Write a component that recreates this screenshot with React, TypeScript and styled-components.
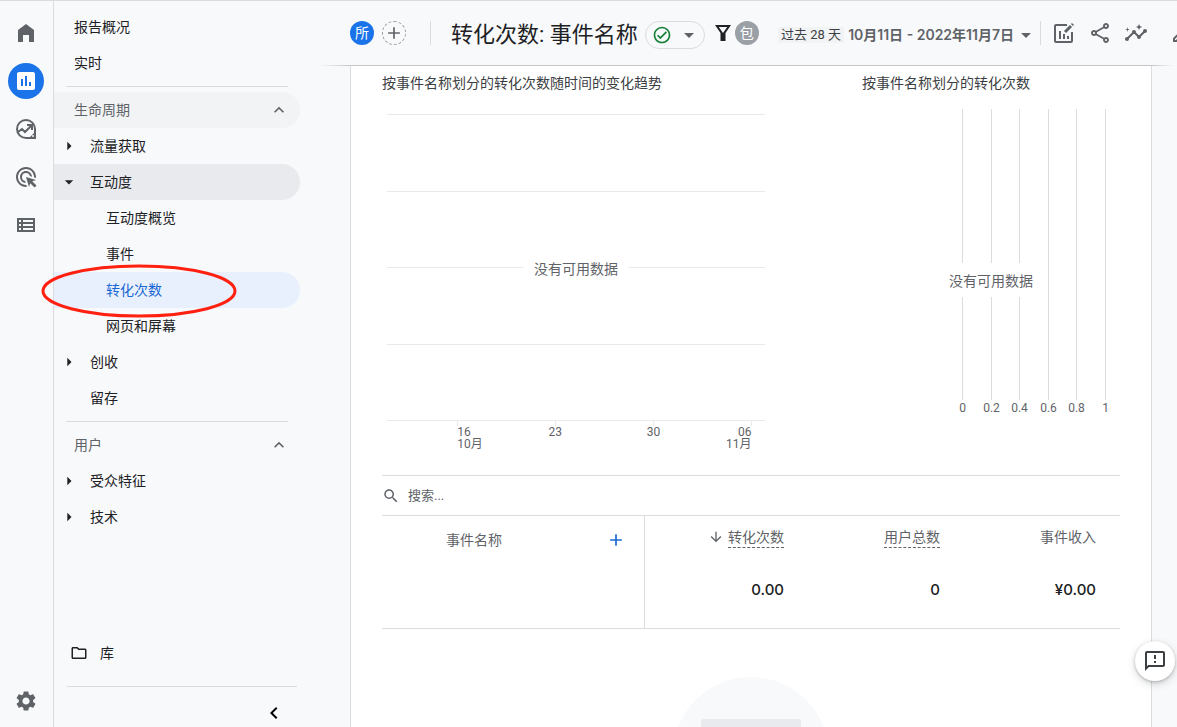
import React from 'react';
import styled, { createGlobalStyle, css } from 'styled-components';
import {
  MdAdd,
  MdArrowDownward,
  MdArrowDropDown,
  MdArrowRight,
  MdChevronLeft,
  MdExpandLess,
  MdInsertChart,
  MdInsights,
  MdOutlineAdsClick,
  MdOutlineCheckCircle,
  MdOutlineEdit,
  MdOutlineFeedback,
  MdOutlineFolder,
  MdOutlineShare,
  MdOutlineViewList,
  MdSearch,
  MdSettings,
} from 'react-icons/md';

const line = '#dadce0';
const grey = '#5f6368';
const ink = '#202124';
const blue = '#1a73e8';

const GlobalStyle = createGlobalStyle`
  *, *::before, *::after { box-sizing: border-box; }
  body {
    margin: 0;
    background: #f8f9fa;
    color: ${ink};
    font: 14px/20px Roboto, "Noto Sans CJK SC", sans-serif;
  }
  button, input { font: inherit; color: inherit; }
  button { border: 0; padding: 0; background: none; cursor: pointer; }
  a { color: inherit; text-decoration: none; }
  svg { display: block; flex: none; }
`;

const Shell = styled.div`
  display: flex;
  height: 100vh;
  overflow: hidden;
  border-top: 1px solid ${line};
  background: #f8f9fb;
`;

const Rail = styled.nav`
  flex: none;
  display: flex;
  flex-direction: column;
  align-items: center;
  gap: 12px;
  width: 54px;
  padding: 14px 2px 8px 0;
  border-right: 1px solid ${line};
`;

const RailButton = styled.button<{ $active?: boolean; $last?: boolean }>`
  display: grid;
  place-items: center;
  width: 36px;
  height: 36px;
  border-radius: 50%;
  color: ${(p) => (p.$active ? '#fff' : grey)};
  background: ${(p) => (p.$active ? blue : 'transparent')};
  ${(p) => p.$last && css`margin-top: auto;`}
`;

const Sidebar = styled.nav`
  flex: none;
  display: flex;
  flex-direction: column;
  width: 266px;
  padding: 8px 20px 0 0;
`;

type Tone = 'section' | 'open' | 'current';
const toneBackground = { section: '#f1f3f4', open: '#e8eaed', current: '#e8f0fe' };

const rowStyle = css`
  position: relative;
  display: flex;
  align-items: center;
  width: 100%;
  height: 36px;
  border-radius: 0 18px 18px 0;
  text-align: left;
`;

const NavLink = styled.a<{ $indent: number; $tone?: Tone }>`
  ${rowStyle}
  padding-left: ${(p) => p.$indent}px;
  color: ${(p) => (p.$tone === 'current' ? '#1967d2' : ink)};
  background: ${(p) => (p.$tone ? toneBackground[p.$tone] : 'transparent')};
`;

const GroupButton = styled.button<{ $tone?: Tone }>`
  ${rowStyle}
  gap: 11px;
  padding-left: 5px;
  background: ${(p) => (p.$tone ? toneBackground[p.$tone] : 'transparent')};
`;

const SectionButton = styled.button<{ $tone?: Tone }>`
  ${rowStyle}
  justify-content: space-between;
  padding: 0 11px 0 20px;
  color: ${grey};
  background: ${(p) => (p.$tone ? toneBackground[p.$tone] : 'transparent')};
`;

const NavRule = styled.hr`
  width: 222px;
  margin: 5px 0 5px 12px;
  border: 0;
  border-top: 1px solid ${line};
`;

const SidebarFoot = styled.div`
  margin-top: auto;
`;

const LibraryLink = styled.a`
  ${rowStyle}
  gap: 12px;
  padding-left: 16px;
`;

const FootBar = styled.div`
  display: flex;
  justify-content: flex-end;
  margin: 15px 3px 0 13px;
  padding: 14px 11px 2px;
  border-top: 1px solid ${line};
  color: #000;
`;

const Marker = styled.svg`
  position: absolute;
  left: -13px;
  top: -8px;
  z-index: 2;
  pointer-events: none;
`;

const Main = styled.main`
  flex: 1;
  min-width: 0;
  display: flex;
  flex-direction: column;
`;

const Header = styled.header`
  flex: none;
  display: flex;
  align-items: center;
  height: 65px;
  padding-left: 30px;
  border-bottom: 1px solid;
  border-image: linear-gradient(to right, transparent, #c4c7ca 30px, #c4c7ca calc(100% - 26px), transparent calc(100% - 4px)) 1;
  overflow: hidden;
`;

const Badge = styled.button<{ $tone: string }>`
  flex: none;
  display: grid;
  place-items: center;
  width: 24px;
  height: 24px;
  border-radius: 50%;
  color: #fff;
  background: ${(p) => p.$tone};
`;

const AddBadge = styled(Badge)`
  margin-left: 8px;
  border: 1px dashed #9aa0a6;
  color: ${grey};
`;

const Separator = styled.span<{ $before: number; $after: number }>`
  flex: none;
  width: 1px;
  height: 24px;
  margin: 0 ${(p) => p.$after}px 0 ${(p) => p.$before}px;
  background: ${line};
`;

const Title = styled.h1`
  margin: 0;
  padding-top: 4px;
  font-size: 22px;
  line-height: 28px;
  font-weight: 400;
  white-space: nowrap;
`;

const StatusButton = styled.button`
  flex: none;
  display: flex;
  align-items: center;
  justify-content: space-between;
  width: 60px;
  height: 28px;
  margin: 4px 6px 0 7px;
  padding: 0 3px 0 6px;
  border: 1px solid ${line};
  border-radius: 14px;
  color: ${grey};
`;

const Tools = styled.div`
  flex: none;
  display: flex;
  align-items: center;
  margin-left: auto;
  margin-right: -23px;
`;

const DateButton = styled.button`
  display: flex;
  align-items: center;
  padding-top: 4px;
  color: ${grey};
  font-size: 13px;
  line-height: 16px;
  white-space: nowrap;
`;

const Preset = styled.span`
  margin-right: 4px;
  padding: 0 3px;
  border-radius: 2px;
  background: #f1f3f4;
  color: #3c4043;
`;

const DateRange = styled.span`
  font-family: Inter, "Noto Sans CJK SC", sans-serif;
  font-size: 14px;
  font-weight: 600;
`;

const ToolButton = styled.button`
  display: grid;
  place-items: center;
  width: 36px;
  height: 36px;
  color: ${grey};

  &:last-child { margin-left: 10px; }
`;

const Scroller = styled.div`
  flex: 1;
  min-height: 0;
  overflow-y: auto;
  scrollbar-width: none;
  padding: 0 25px 0 30px;
`;

const Card = styled.article`
  min-height: 100%;
  padding: 7px 31px 0;
  border: solid ${line};
  border-width: 0 1px;
  background: #fff;
`;

const Charts = styled.section`
  display: grid;
  grid-template-columns: minmax(0, 1fr) 258px;
  column-gap: 92px;
  height: 402px;
`;

const Figure = styled.figure`
  margin: 0;
`;

const Caption = styled.figcaption`
  color: #3c4043;
`;

const Plot = styled.div<{ $top: number; $side: number }>`
  position: relative;
  margin: ${(p) => p.$top}px ${(p) => p.$side}px 0;
`;

const PlotSvg = styled.svg<{ $grid: string }>`
  width: 100%;
  overflow: visible;
  font-size: 12px;
  fill: ${grey};

  line {
    stroke: ${(p) => p.$grid};
    shape-rendering: crispEdges;
  }
`;

const NoData = styled.span<{ $top: number }>`
  position: absolute;
  left: 50%;
  top: ${(p) => p.$top}px;
  transform: translateX(-50%);
  padding: 8px 10px 6px;
  background: #fff;
  color: ${grey};
  white-space: nowrap;
`;

const SearchRow = styled.label`
  display: flex;
  align-items: center;
  gap: 8px;
  height: 41px;
  border: solid ${line};
  border-width: 1px 0;
  color: ${grey};
`;

const SearchInput = styled.input`
  flex: 1;
  border: 0;
  outline: 0;
  padding: 0;
  background: none;
  font-size: 13px;

  &::placeholder { color: ${grey}; opacity: 1; }
`;

const Table = styled.table`
  width: 100%;
  table-layout: fixed;
  border-collapse: separate;
  border-spacing: 0;
  border-bottom: 1px solid ${line};
`;

const HeadCell = styled.th`
  height: 44px;
  padding: 0 24px 2px 0;
  color: ${grey};
  font-weight: 400;
  text-align: right;
`;

const DimensionCell = styled(HeadCell)`
  padding: 4px 18px 0 64px;
  border-right: 1px solid ${line};
`;

const DimensionHead = styled.div`
  display: flex;
  align-items: center;
  justify-content: space-between;
`;

const AddDimension = styled.button`
  color: #1967d2;
`;

const SortButton = styled.button`
  display: inline-flex;
  align-items: center;
  gap: 4px;
  vertical-align: top;
`;

const Term = styled.span<{ $plain?: boolean }>`
  display: inline-block;
  vertical-align: top;
  border-bottom: 1px dashed ${(p) => (p.$plain ? 'transparent' : grey)};
`;

const ValueCell = styled.td`
  height: 68px;
  padding: 0 24px 8px 0;
  font-family: Inter, "Noto Sans CJK SC", sans-serif;
  font-size: 15px;
  font-weight: 500;
  text-align: right;
`;

const BlankCell = styled.td`
  border-right: 1px solid ${line};
`;

const EmptyArt = styled.svg`
  margin: 48px auto 0;
`;

const FeedbackButton = styled.button`
  position: fixed;
  right: 2px;
  bottom: 46px;
  display: grid;
  place-items: center;
  width: 40px;
  height: 40px;
  border-radius: 50%;
  background: #fff;
  color: #3c4043;
  box-shadow: 0 1px 3px rgba(60, 64, 67, 0.3), 0 3px 8px rgba(60, 64, 67, 0.2);
`;

const HomeIcon = () => (
  <svg width="24" height="24" viewBox="0 0 24 24" fill="currentColor">
    <path d="M12 3 4 9v12h5v-7h6v7h5V9z" />
  </svg>
);

const ExploreIcon = () => (
  <svg width="24" height="24" viewBox="0 0 24 24" fill="none" stroke="currentColor" strokeWidth="2">
    <path d="M21 12a9 9 0 1 0-9 9h9z" />
    <path d="m4 15 4-3 3 3 6-6M13 8h5v5" />
    <path d="M15 21l7-7v8h-7z" fill="currentColor" stroke="none" />
    <circle cx="19" cy="19" r="1" fill="#f8f9fb" stroke="none" />
  </svg>
);

const FilterIcon = () => (
  <svg width="24" height="24" viewBox="0 0 24 24" fill="currentColor">
    <path fillRule="evenodd" d="M4 4h16l-5.5 8v8h-5v-8zM7.800 6l4.200 6 4.200-6z" />
  </svg>
);

const CustomizeIcon = () => (
  <svg width="24" height="24" viewBox="0 0 24 24" fill="none" stroke="currentColor" strokeWidth="2">
    <path d="M15 4H4a1 1 0 0 0-1 1v15a1 1 0 0 0 1 1h15a1 1 0 0 0 1-1V11" />
    <path d="M8 10v8M12 13v5M16 15v3" />
    <path d="m13 11 6-6M20 4l1-1" strokeWidth="3" />
  </svg>
);

const dates = [
  { x: '18.6%', day: '16', month: '10月', anchor: 'start' as const },
  { x: '44.5%', day: '23', anchor: 'middle' as const },
  { x: '70.5%', day: '30', anchor: 'middle' as const },
  { x: '96.4%', day: '06', month: '11月', anchor: 'end' as const },
];

const TrendPlot = () => (
  <Plot $top={21} $side={5}>
    <PlotSvg height="340" $grid="#e8eaed">
      {[0, 77, 153, 230, 306].map((y) => (
        <line key={y} x1="0" x2="100%" y1={y + 0.5} y2={y + 0.5} />
      ))}
      {dates.map((d) => (
        <g key={d.day}>
          <line x1={d.x} x2={d.x} y1="307" y2="312" />
          <text x={d.x} y="322" textAnchor={d.anchor}>{d.day}</text>
          {d.month && <text x={d.x} y="334" textAnchor={d.anchor}>{d.month}</text>}
        </g>
      ))}
    </PlotSvg>
    <NoData $top={137}>没有可用数据</NoData>
  </Plot>
);

const ticks = ['0', '0.2', '0.4', '0.6', '0.8', '1'];
const tickX = (i: number) => 100.5 + Math.round(i * 28.6);

const BarPlot = () => (
  <Plot $top={16} $side={0}>
    <PlotSvg height="310" $grid={line}>
      {ticks.map((t, i) => (
        <g key={t}>
          <line x1={tickX(i)} x2={tickX(i)} y1="0" y2="291" />
          <text x={tickX(i)} y="303" textAnchor="middle">{t}</text>
        </g>
      ))}
    </PlotSvg>
    <NoData $top={154}>没有可用数据</NoData>
  </Plot>
);

const Group = ({ label, open }: { label: string; open?: boolean }) => (
  <GroupButton $tone={open ? 'open' : undefined} aria-expanded={!!open}>
    {open ? <MdArrowDropDown size={20} /> : <MdArrowRight size={20} />}
    <span>{label}</span>
  </GroupButton>
);

export default function App() {
  return (
    <>
      <GlobalStyle />
      <Shell>
        <Rail aria-label="主导航">
          <RailButton aria-label="首页"><HomeIcon /></RailButton>
          <RailButton aria-label="报告" $active><MdInsertChart size={24} /></RailButton>
          <RailButton aria-label="探索"><ExploreIcon /></RailButton>
          <RailButton aria-label="广告"><MdOutlineAdsClick size={24} /></RailButton>
          <RailButton aria-label="配置"><MdOutlineViewList size={24} /></RailButton>
          <RailButton aria-label="管理" $last><MdSettings size={24} /></RailButton>
        </Rail>

        <Sidebar aria-label="报告导航">
          <NavLink href="#overview" $indent={20}>报告概况</NavLink>
          <NavLink href="#realtime" $indent={20}>实时</NavLink>
          <NavRule />
          <SectionButton $tone="section" aria-expanded>
            生命周期 <MdExpandLess size={20} />
          </SectionButton>
          <Group label="流量获取" />
          <Group label="互动度" open />
          <NavLink href="#engagement" $indent={52}>互动度概览</NavLink>
          <NavLink href="#events" $indent={52}>事件</NavLink>
          <NavLink href="#conversions" $indent={52} $tone="current" aria-current="page">
            转化次数
            <Marker width="198" height="54" viewBox="0 0 198 54" fill="none">
              <ellipse cx="98" cy="27" rx="96" ry="25" stroke="#ff2010" strokeWidth="3" />
            </Marker>
          </NavLink>
          <NavLink href="#pages" $indent={52}>网页和屏幕</NavLink>
          <Group label="创收" />
          <NavLink href="#retention" $indent={36}>留存</NavLink>
          <NavRule />
          <SectionButton aria-expanded>
            用户 <MdExpandLess size={20} />
          </SectionButton>
          <Group label="受众特征" />
          <Group label="技术" />
          <SidebarFoot>
            <LibraryLink href="#library">
              <MdOutlineFolder size={18} /> 库
            </LibraryLink>
            <FootBar>
              <button aria-label="收起"><MdChevronLeft size={24} /></button>
            </FootBar>
          </SidebarFoot>
        </Sidebar>

        <Main>
          <Header>
            <Badge $tone={blue}>所</Badge>
            <AddBadge $tone="transparent" aria-label="添加对比"><MdAdd size={20} /></AddBadge>
            <Separator $before={24} $after={20} />
            <Title>转化次数: 事件名称</Title>
            <StatusButton aria-label="数据状态">
              <MdOutlineCheckCircle size={20} color="#188038" />
              <MdArrowDropDown size={24} />
            </StatusButton>
            <FilterIcon />
            <Badge $tone="#9aa0a6">包</Badge>
            <Tools>
              <DateButton>
                <Preset>过去 28 天</Preset>
                <DateRange>10月11日 - 2022年11月7日</DateRange>
                <MdArrowDropDown size={24} />
              </DateButton>
              <Separator $before={2} $after={5} />
              <ToolButton aria-label="自定义报告"><CustomizeIcon /></ToolButton>
              <ToolButton aria-label="分享"><MdOutlineShare size={24} /></ToolButton>
              <ToolButton aria-label="数据洞见"><MdInsights size={24} /></ToolButton>
              <ToolButton aria-label="修改"><MdOutlineEdit size={24} /></ToolButton>
            </Tools>
          </Header>

          <Scroller>
            <Card>
              <Charts>
                <Figure>
                  <Caption>按事件名称划分的转化次数随时间的变化趋势</Caption>
                  <TrendPlot />
                </Figure>
                <Figure>
                  <Caption>按事件名称划分的转化次数</Caption>
                  <BarPlot />
                </Figure>
              </Charts>

              <SearchRow>
                <MdSearch size={18} />
                <SearchInput type="text" placeholder="搜索..." aria-label="搜索" />
              </SearchRow>

              <Table>
                <colgroup>
                  <col width="263" />
                  <col />
                  <col width="156" />
                  <col width="156" />
                </colgroup>
                <thead>
                  <tr>
                    <DimensionCell scope="col">
                      <DimensionHead>
                        事件名称
                        <AddDimension aria-label="添加维度"><MdAdd size={20} /></AddDimension>
                      </DimensionHead>
                    </DimensionCell>
                    <HeadCell scope="col">
                      <SortButton><MdArrowDownward size={16} /><Term>转化次数</Term></SortButton>
                    </HeadCell>
                    <HeadCell scope="col"><Term>用户总数</Term></HeadCell>
                    <HeadCell scope="col"><Term $plain>事件收入</Term></HeadCell>
                  </tr>
                </thead>
                <tbody>
                  <tr>
                    <BlankCell />
                    <ValueCell>0.00</ValueCell>
                    <ValueCell>0</ValueCell>
                    <ValueCell>¥0.00</ValueCell>
                  </tr>
                </tbody>
              </Table>

              <EmptyArt width="156" height="156" viewBox="0 0 156 156">
                <circle cx="78" cy="78" r="78" fill="#f8f9fa" />
                <rect x="28" y="42" width="100" height="72" rx="3" fill="#e8eaed" />
              </EmptyArt>
            </Card>
          </Scroller>
        </Main>

        <FeedbackButton aria-label="反馈"><MdOutlineFeedback size={24} /></FeedbackButton>
      </Shell>
    </>
  );
}
